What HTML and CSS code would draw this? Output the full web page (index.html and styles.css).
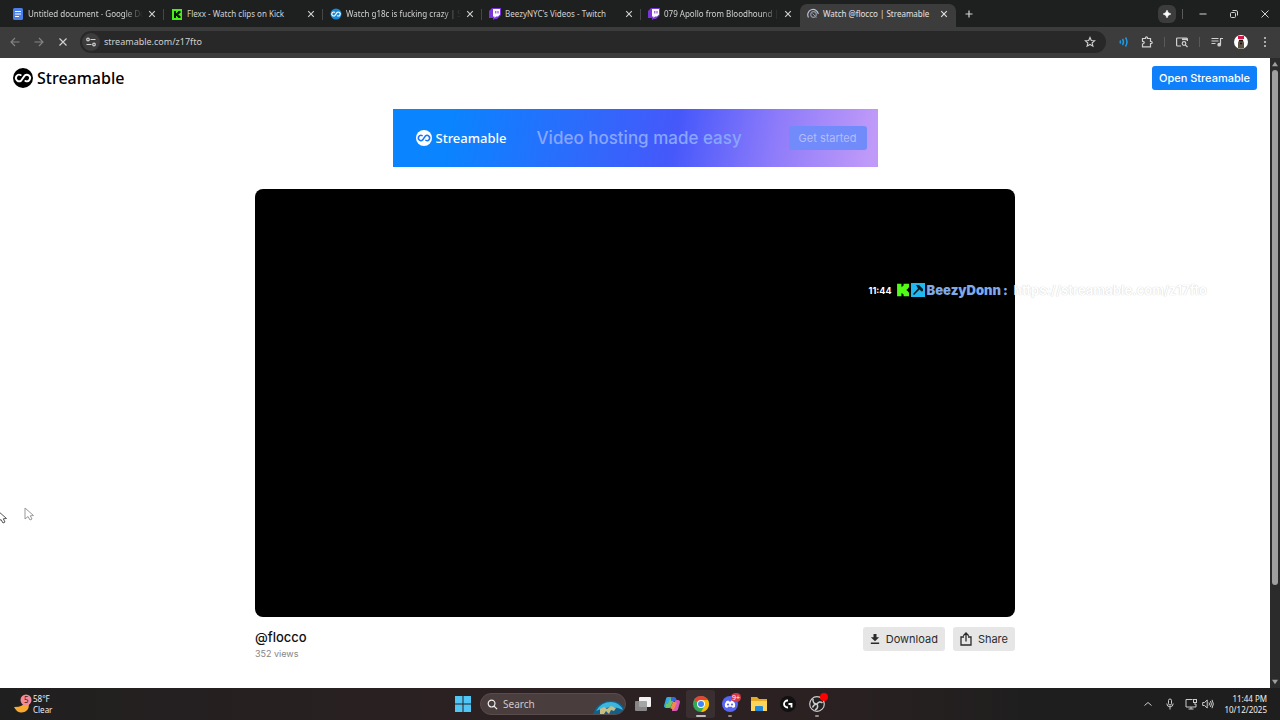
FILE: index.html
```html
<!DOCTYPE html>
<html lang="en">
<head>
    <meta charset="UTF-8">
    <meta name="viewport" content="width=device-width, initial-scale=1.0">
    <title>Watch @flocco | Streamable</title>
    <link rel="stylesheet" href="styles.css">
</head>
<body>
<svg class="defs" aria-hidden="true">
    <symbol id="loop" viewBox="0 0 24 24">
        <path d="M9.200 8.500A3.900 3.900 0 1 0 10 14.900L14 9.100A3.900 3.900 0 1 1 14.800 15.500" fill="none" stroke="currentColor" stroke-width="2.300" stroke-linecap="round"/>
    </symbol>
    <symbol id="close" viewBox="0 0 10 10">
        <path d="M2.200 2.200L7.800 7.800M7.800 2.200L2.200 7.800" stroke="currentColor" stroke-width="1.100"/>
    </symbol>
    <symbol id="twitch" viewBox="0 0 12 12">
        <path d="M3 0H12V7L8 11H6L4 12V10H0V3Z" fill="#7a35d8"/>
        <path d="M4 1H11V6.500L9 8.500H7L5.500 10V8.500H4Z" fill="#fff"/>
        <path d="M6.800 3V5.500M9 3V5.500" stroke="#7a35d8" stroke-width="1"/>
    </symbol>
    <symbol id="kick" viewBox="0 0 12 12">
        <path d="M1 0H5V3H6V2H7V0H12V4H11V5H10V7H11V8H12V12H7V10H6V9H5V12H1Z"/>
    </symbol>
</svg>

<div class="tabs">
    <div class="tab">
        <svg class="favicon" viewBox="0 0 12 12"><rect x="1" width="10" height="12" rx="1.500" fill="#4a80e8"/><path d="M3 3.500H9M3 6H9M3 8.500H7" stroke="#fff"/></svg>
        <span class="tab-title fade">Untitled document - Google Do</span>
        <button class="tab-close" aria-label="Close tab"><svg><use href="#close"/></svg></button>
    </div>
    <div class="tab">
        <svg class="favicon" viewBox="0 0 12 12"><rect x="1" y="1" width="10" height="11" fill="#46f016"/><path d="M3 3H5V5H6V4H7V3H9.500V5H8.500V6H7.500V7H8.500V8H9.500V10H7V9H6V8H5V10H3Z" fill="#111"/></svg>
        <span class="tab-title">Flexx - Watch clips on Kick</span>
        <button class="tab-close" aria-label="Close tab"><svg><use href="#close"/></svg></button>
    </div>
    <div class="tab">
        <svg class="favicon white" viewBox="0 0 24 24"><circle cx="12" cy="12" r="11" fill="#1889d6"/><use href="#loop"/></svg>
        <span class="tab-title fade">Watch g18c is fucking crazy | St</span>
        <button class="tab-close" aria-label="Close tab"><svg><use href="#close"/></svg></button>
    </div>
    <div class="tab">
        <svg class="favicon"><use href="#twitch"/></svg>
        <span class="tab-title">BeezyNYC's Videos - Twitch</span>
        <button class="tab-close" aria-label="Close tab"><svg><use href="#close"/></svg></button>
    </div>
    <div class="tab last">
        <svg class="favicon"><use href="#twitch"/></svg>
        <span class="tab-title fade">079 Apollo from Bloodhound | V</span>
        <button class="tab-close" aria-label="Close tab"><svg><use href="#close"/></svg></button>
    </div>
    <div class="tab active">
        <svg class="favicon" viewBox="0 0 12 12" fill="none"><path d="M1.500 9.500A5.300 5.300 0 1 1 11.300 6" stroke="#b9c0d8" stroke-width="1.200"/><circle cx="6.500" cy="6.500" r="2.800" stroke="#8f95a5" stroke-width="1.200"/><path d="M5.500 5.500L9.500 9.500" stroke="#8f95a5"/></svg>
        <span class="tab-title">Watch @flocco | Streamable</span>
        <button class="tab-close" aria-label="Close tab"><svg><use href="#close"/></svg></button>
    </div>
    <button class="new-tab" aria-label="New tab"><svg viewBox="0 0 10 10"><path d="M5 1.500V8.500M1.500 5H8.500" stroke="currentColor" stroke-width="1.200"/></svg></button>
    <div class="window-buttons">
        <button class="gemini" aria-label="Assistant"><svg viewBox="0 0 12 12"><path d="M6 1.500Q6.700 5.300 10.500 6Q6.700 6.700 6 10.500Q5.300 6.700 1.500 6Q5.300 5.300 6 1.500Z" fill="#fff" stroke="#fff"/></svg></button>
        <span class="line"></span>
        <button class="win" aria-label="Minimize"><svg viewBox="0 0 10 10"><path d="M1.500 5H8.500" stroke="currentColor"/></svg></button>
        <button class="win" aria-label="Restore"><svg viewBox="0 0 10 10" fill="none" stroke="currentColor"><rect x="1.500" y="3.500" width="5" height="5" rx="1"/><path d="M3.500 1.500H7A1.500 1.500 0 0 1 8.500 3V6.500"/></svg></button>
        <button class="win" aria-label="Close window"><svg viewBox="0 0 10 10"><path d="M1.500 1.500L8.500 8.500M8.500 1.500L1.500 8.500" stroke="currentColor"/></svg></button>
    </div>
</div>

<div class="toolbar">
    <button class="nav dim" aria-label="Back"><svg viewBox="0 0 12 12"><path d="M10.500 6H2M6 2L2 6L6 10" fill="none" stroke="currentColor" stroke-width="1.100"/></svg></button>
    <button class="nav dim" aria-label="Forward"><svg viewBox="0 0 12 12"><path d="M1.500 6H10M6 2L10 6L6 10" fill="none" stroke="currentColor" stroke-width="1.100"/></svg></button>
    <button class="nav" aria-label="Stop"><svg viewBox="0 0 12 12"><path d="M2.500 2.500L9.500 9.500M9.500 2.500L2.500 9.500" stroke="currentColor" stroke-width="1.200"/></svg></button>
    <div class="omnibox">
        <button class="site-info" aria-label="Site information"><svg viewBox="0 0 12 12" fill="none" stroke="currentColor" stroke-width="1.200"><circle cx="3" cy="3.500" r="1.300"/><path d="M5.500 3.500H10.500M1.500 8.500H6.500"/><circle cx="9" cy="8.500" r="1.300"/></svg></button>
        <input type="text" value="streamable.com/z17fto" aria-label="Address bar">
        <button class="star" aria-label="Bookmark"><svg viewBox="0 0 12 12"><path d="M6 1.500L7.300 4.500L10.600 4.800L8.100 7L8.900 10.200L6 8.500L3.100 10.200L3.900 7L1.400 4.800L4.700 4.500Z" fill="none" stroke="currentColor" stroke-width="1.100"/></svg></button>
    </div>
    <div class="tools">
        <button class="blue" aria-label="Volume extension"><svg viewBox="0 0 12 12" fill="none" stroke="currentColor" stroke-width="1.500"><path d="M2 4.500Q3 6 2 7.500M4.500 3Q6.500 6 4.500 9M7.500 1.500Q10.500 6 7.500 10.500"/></svg></button>
        <button aria-label="Extensions"><svg viewBox="0 0 12 12" fill="none" stroke="currentColor" stroke-width="1.200"><path d="M1.500 2.500H4.500V1.800A1 1 0 0 1 6.500 1.800V2.500H9.500V5.500H10.200A1 1 0 0 1 10.200 7.500H9.500V10.800H1.500V8Q3.300 7.800 3.300 6.600Q3.300 5.500 1.500 5.300Z"/></svg></button>
        <span class="line"></span>
        <button aria-label="Search side panel"><svg viewBox="0 0 12 12" fill="none" stroke="currentColor" stroke-width="1.200"><path d="M5 10H1.500Q.6 10 .6 9V3Q.6 2 1.500 2H10.500Q11.400 2 11.400 3V5"/><path d="M6 3.200H11" stroke-width="1.800"/><circle cx="8" cy="7.500" r="1.800"/><path d="M9.300 8.800L11.500 11"/></svg></button>
        <span class="line"></span>
        <button aria-label="Media controls"><svg viewBox="0 0 12 12" fill="none" stroke="currentColor" stroke-width="1.200"><path d="M.5 2.500H7.500M.5 5H7.500M.5 7.500H4.500M9.500 8.500V2.500H12"/><circle cx="8.200" cy="8.700" r="1.300" fill="currentColor"/></svg></button>
        <button aria-label="Profile"><svg class="avatar" viewBox="0 0 14 14"><circle cx="7" cy="7" r="7" fill="#fff"/><path d="M4 13V8L5 5H9L10 8V13Q7 14.500 4 13Z" fill="#5d5140"/><rect x="4" y="1" width="6" height="3" fill="#d41845"/><path d="M5 5.500H9M6 8.500H8" stroke="#191919" stroke-width="1.500"/></svg></button>
        <button aria-label="Menu"><svg viewBox="0 0 12 12" fill="currentColor"><circle cx="6" cy="2" r="1"/><circle cx="6" cy="6" r="1"/><circle cx="6" cy="10" r="1"/></svg></button>
    </div>
</div>

<div class="viewport">
    <div class="page">
        <header>
            <a class="logo" href="#">
                <svg viewBox="0 0 24 24"><circle cx="12" cy="12" r="12" fill="#000"/><use class="white" href="#loop"/></svg>
                Streamable
            </a>
            <button class="open">Open Streamable</button>
        </header>
        <a class="banner" href="#">
            <span class="banner-logo"><svg viewBox="0 0 24 24"><circle cx="12" cy="12" r="12" fill="#fff"/><use href="#loop"/></svg>Streamable</span>
            <span class="slogan">Video hosting made easy</span>
            <span class="started">Get started</span>
        </a>
        <main>
            <div class="video"></div>
            <div class="details">
                <div>
                    <h1>@flocco</h1>
                    <p>352 views</p>
                </div>
                <div class="actions">
                    <button><svg viewBox="0 0 12 12" fill="currentColor"><path d="M4.200 0H7.800V4H11L6 8.800L1 4H4.200ZM1 10.300H11V12H1Z"/></svg>Download</button>
                    <button><svg class="tall" viewBox="0 0 12 14" fill="none" stroke="currentColor" stroke-width="1.300"><path d="M4 5H1V13H11V5H8M6 9.500V1M3.300 3.700L6 1L8.700 3.700"/></svg>Share</button>
                </div>
            </div>
        </main>
    </div>
    <div class="scrollbar">
        <svg viewBox="0 0 8 6"><path d="M4 0L8 6H0Z"/></svg>
        <div class="track"><div class="thumb"></div></div>
        <svg viewBox="0 0 8 6"><path d="M0 0H8L4 6Z"/></svg>
    </div>

    <!-- chat overlay -->
    <div class="chat">
        <time>11:44</time>
        <svg viewBox="0 0 12 12" fill="#53fc18"><use href="#kick"/></svg>
        <svg class="mod" viewBox="0 0 14 14"><rect width="14" height="14" fill="#1fb8f0"/><path d="M5 2H8L12 6V8L10.500 8.500L8.500 6.500L3 12L2 11L7 5.500Z" fill="#0b1c26"/></svg>
        <b>BeezyDonn</b><b class="colon">:</b>
        <span class="link">https://streamable.com/z17fto</span>
    </div>
    <svg class="cursor edge" viewBox="0 0 10 14"><path d="M1 1V12L4 9.500L6 13L8 12L6.300 8.800L9.500 8.500Z"/></svg>
    <svg class="cursor soft" viewBox="0 0 10 14"><path d="M1 1V12L4 9.500L6 13L8 12L6.300 8.800L9.500 8.500Z"/></svg>
</div>

<footer class="taskbar">
    <div class="weather">
        <svg viewBox="0 0 20 20"><path d="M11 7Q12 13 1 13Q4 19 9 18.500Q16 18 16 10Z" fill="#f8a932"/><circle cx="13" cy="6" r="5.500" fill="#f28a9c"/><text x="11" y="9">5</text></svg>
        <div>58°F<br>Clear</div>
    </div>
    <div class="apps">
        <button class="start" aria-label="Start"><svg viewBox="0 0 16 16" fill="#4fc6f5"><path d="M0 0H7.500V7.500H0ZM8.500 0H16V7.500H8.500ZM0 8.500H7.500V16H0ZM8.500 8.500H16V16H8.500Z"/></svg></button>
        <div class="search">
            <svg viewBox="0 0 12 12" fill="none" stroke="currentColor" stroke-width="1.300"><circle cx="5" cy="5" r="3.700"/><path d="M7.700 7.700L11 11"/></svg>
            <input type="text" placeholder="Search" aria-label="Search">
            <svg class="art" viewBox="0 0 32 14"><path d="M0 14Q3 4 14 1Q27 -1 32 10Q31 13 28 14Z" fill="#12608c"/><path d="M3 11Q8 2 18 2Q26 2 30 10Q20 4 3 11Z" fill="#3bb6df"/><path d="M7 14V9L11 7L14 9L18 6L23 8L21 11L18 10L16 14L13 11L11 14Z" fill="#c7bd85"/></svg>
        </div>
        <button aria-label="Task view"><svg viewBox="0 0 18 18"><rect x="5" y="2" width="12" height="10" rx="1" fill="#f2f2f2"/><rect x="1" y="6" width="12" height="10" rx="1" fill="#999" fill-opacity=".85"/></svg></button>
        <button aria-label="Copilot"><svg viewBox="0 0 18 18" fill="none" stroke-width="4" stroke-linejoin="round"><path d="M9 4H5L3 11H6" stroke="#36a9e8"/><path d="M3 11H6L9 4" stroke="#6ac66b"/><path d="M9 14H13L15 7H12" stroke="#d759b6"/><path d="M9 14L12 7" stroke="#f08b4b"/><path d="M8 4H11L12 6" stroke="#3269df"/></svg></button>
        <button class="current" aria-label="Chrome"><svg viewBox="0 0 18 18"><circle cx="9" cy="9" r="8" fill="#34a853"/><path d="M9 9L2.070 5A8 8 0 0 1 15.930 5Z" fill="#ea4335"/><path d="M9 9L9 5H15.930A8 8 0 0 1 9 17L12.500 11Z" fill="#fbbc05"/><circle cx="9" cy="9" r="4" fill="#fff"/><circle cx="9" cy="9" r="3" fill="#4285f4"/></svg></button>
        <button class="running" aria-label="Discord"><svg viewBox="0 0 18 18"><circle cx="9" cy="9" r="8" fill="#5865f2"/><path d="M4 12Q3.500 8 5.500 6L7.500 5.500L8 6.500H10L10.500 5.500L12.500 6Q14.500 8 14 12L11.700 13L11 11.800H7L6.300 13Z" fill="#fff"/><circle cx="7" cy="9.500" r="1.100" fill="#5865f2"/><circle cx="11" cy="9.500" r="1.100" fill="#5865f2"/></svg><span class="badge">9+</span></button>
        <button aria-label="File Explorer"><svg viewBox="0 0 18 18"><path d="M1 2H7L9 4H17V15H1Z" fill="#e8a922"/><path d="M1 6H17V16H1Z" fill="#fcd45a"/><path d="M5 16V12Q5 11 6 11H12Q13 11 13 12V16Z" fill="#2488d8"/></svg></button>
        <button aria-label="Logitech G Hub"><svg viewBox="0 0 18 18"><circle cx="9" cy="9" r="8" fill="#111"/><path d="M9 5.500H8.500A3.500 3.500 0 0 0 8.500 12.500H9M9.500 9H12.500V12.500" fill="none" stroke="#fff" stroke-width="1.800"/></svg></button>
        <button class="running" aria-label="OBS Studio"><svg viewBox="0 0 18 18" fill="none" stroke="#ccc" stroke-width="1.200"><circle cx="9" cy="9" r="7.300" fill="#222"/><path d="M9 9Q4.500 9 5 4M9 9Q11.500 5.500 14.500 8M9 9Q11 13 7 15M9 9Q6 9 4.500 12.500" stroke-width="1.500"/></svg><span class="badge dot"></span></button>
    </div>
    <div class="tray">
        <svg viewBox="0 0 12 12"><path d="M2.500 7.500L6 4.500L9.500 7.500"/></svg>
        <svg class="mic" viewBox="0 0 12 12"><rect x="4.500" y="1" width="3" height="6" rx="1.500"/><path d="M2.800 5.500Q2.800 8.800 6 8.800Q9.200 8.800 9.200 5.500M6 9V11.500"/></svg>
        <svg viewBox="0 0 12 12"><path d="M7.500 1.500H1V9H11V6M3.500 11H8.500M6 9V11M10 5V7"/><rect x="8.500" y="1.500" width="3" height="3"/></svg>
        <svg viewBox="0 0 12 12"><path d="M.7 4.500H2.500L5.200 2V10L2.500 7.500H.7ZM7 4.500Q8 6 7 7.500M8.500 3Q10.300 6 8.500 9M10 1.800Q12.700 6 10 10.200"/></svg>
        <div class="clock">11:44 PM<br>10/12/2025</div>
    </div>
</footer>
</body>
</html>
```

FILE: styles.css
```css
* { box-sizing: border-box; }
body {
    margin: 0; height: 100vh;
    display: flex; flex-direction: column;
    font-family: "Noto Sans", "Open Sans", sans-serif;
    background: #fff; color: #111; overflow: hidden;
}
button {
    border: none; padding: 0; background: none; color: inherit;
    font: inherit; display: flex; align-items: center; justify-content: center;
}
input { border: none; outline: none; background: none; color: inherit; font: inherit; padding: 0; min-width: 0; }
a { text-decoration: none; color: inherit; }
svg { flex: none; }
.defs { display: none; }
.white { color: #fff; }

/* tab strip */
.tabs {
    display: flex; align-items: stretch;
    height: 27px; padding: 4px 0 0 5px; flex: none;
    background: #1e201f; color: #d2d2d2; font-size: 8px;
}
.tab {
    flex: 0 1 159px; min-width: 0; padding: 0 7px 4px; position: relative;
    display: flex; align-items: center; gap: 4px;
}
.tab::after {
    content: ""; width: 1px; height: 11px; background: #454746;
    position: absolute; right: 0; top: 5px;
}
.tab.last::after, .tab.active::after { display: none; }
.tab.active { background: #3c3c3c; border-radius: 7px 7px 0 0; flex-basis: 156px; color: #e3e3e3; }
.favicon { width: 12px; height: 12px; }
.tab-title { flex: 1; min-width: 0; white-space: nowrap; }
.tab-title.fade {
    -webkit-mask-image: linear-gradient(90deg, #000 84%, transparent);
    mask-image: linear-gradient(90deg, #000 84%, transparent);
}
.tab-close svg, .new-tab svg, .win svg { width: 10px; height: 10px; display: block; }
.new-tab { width: 26px; padding-bottom: 4px; }
.window-buttons { margin-left: auto; display: flex; align-items: center; padding-bottom: 4px; }
.gemini { width: 18px; height: 18px; border-radius: 6px; background: #3c3c3c; margin-right: 6px; }
.gemini svg { width: 10px; height: 10px; }
.line { width: 1px; height: 10px; background: #5a5a5a; }
.win { width: 31px; }
.window-buttons .line { margin-right: 4px; }

/* toolbar */
.toolbar {
    display: flex; align-items: center;
    height: 31px; padding: 0 9px 2px 3px; flex: none;
    background: #3c3c3c; color: #d0d0d0;
}
.toolbar svg { width: 12px; height: 12px; display: block; }
.nav { width: 24px; height: 24px; }
.dim { color: #858585; }
.omnibox {
    flex: 1; height: 22px; margin-left: 5px; padding: 0 10px 0 2px;
    display: flex; align-items: center; gap: 4px;
    background: #282828; border-radius: 11px; font-size: 9px;
}
.omnibox input { flex: 1; }
.site-info { width: 18px; height: 18px; border-radius: 50%; background: #3c3c3c; }
.tools { display: flex; align-items: center; gap: 11px; margin-left: 12px; }
.toolbar .avatar { width: 14px; height: 14px; }
.blue { color: #1e9be8; }

/* page */
.viewport { flex: 1; min-height: 0; display: flex; position: relative; overflow: hidden; }
.page { flex: 1; display: flex; flex-direction: column; align-items: center; font-family: Inter, sans-serif; }
header { width: 100%; height: 40px; padding: 0 13px; display: flex; align-items: center; justify-content: space-between; }
.logo, .banner-logo { display: flex; align-items: center; gap: 4px; font-family: "Noto Sans", sans-serif; font-weight: 500; font-size: 16px; color: #000; }
.logo svg { width: 20px; height: 20px; }
.open { background: #0f80fa; color: #fff; height: 24px; padding: 0 7px; border-radius: 3px; font-size: 11px; font-weight: 500; }
.banner {
    width: 485px; max-width: 100%; height: 58px; margin-top: 11px; padding: 0 11px 0 23px;
    display: flex; align-items: center;
    background: linear-gradient(100deg, #0a84ff 12%, #4658fa 58%, #8d7bfa 78%, #bf9af8 98%);
}
.banner-logo { font-size: 13px; color: #fff; }
.banner-logo svg { width: 16px; height: 16px; color: #1876ff; }
.slogan { font-size: 17px; font-weight: 500; color: #88a6ff; margin-left: 30px; }
.started { background: #718bfa; color: #b5bdfd; height: 24px; line-height: 24px; padding: 0 10px; border-radius: 3px; font-size: 11px; margin-left: auto; }
main { width: 100%; max-width: 760px; margin-top: 22px; }
.video { aspect-ratio: 16 / 9; background: #000; border-radius: 8px; }
.details { display: flex; justify-content: space-between; padding-top: 10px; }
h1 { margin: 0; font-size: 13px; line-height: 20px; font-weight: 500; }
p { margin: 0; font-size: 9px; line-height: 14px; color: #858585; }
.actions { display: flex; gap: 8px; }
.actions button { height: 24px; padding: 0 7px; gap: 6px; background: #e6e6e6; border-radius: 3px; font-size: 11px; color: #2b2b2b; }
.actions svg { width: 10px; height: 12px; }
.actions .tall { width: 12px; height: 14px; }

.scrollbar { width: 10px; background: #2b2b2b; display: flex; flex-direction: column; align-items: center; padding: 3px 0; gap: 3px; }
.scrollbar svg { width: 6px; height: 6px; fill: #9f9f9f; }
.track { flex: 1; width: 6px; }
.thumb { height: 85%; background: #9f9f9f; border-radius: 3px; }

.chat {
    position: absolute; right: 73px; top: 222px;
    display: flex; align-items: center; height: 20px;
    font: 700 13px Inter, sans-serif; color: #fff; white-space: nowrap;
}
.chat time { font-size: 9px; margin-right: 4px; }
.chat svg { width: 13px; height: 14px; margin-right: 2px; }
.chat .mod { width: 14px; }
.chat b { color: #7fa9e8; }
.chat .colon { margin: 0 6px 0 2px; }
.link { text-shadow: 0 0 1px #bbb; }
.cursor { position: absolute; width: 10px; height: 14px; fill: #fff; stroke: #555; stroke-width: 1; }
.edge { left: -3px; top: 452px; }
.soft { left: 24px; top: 449px; stroke: #999; }

/* taskbar */
.taskbar {
    height: 32px; flex: none; padding: 0 13px;
    display: grid; grid-template-columns: 1fr auto 1fr; align-items: center;
    background: linear-gradient(90deg, #201f1f, #2c2122 40%, #2c2122 62%, #1f1e1e 80%);
    color: #f0f0f0; font-size: 8px; line-height: 11px;
}
.weather { display: flex; align-items: center; }
.weather svg { width: 20px; height: 20px; }
.weather text { font-size: 8px; fill: #3a1d22; }
.apps { display: flex; align-items: center; height: 100%; padding-left: 6px; }
.apps button { width: 29px; height: 28px; position: relative; }
.apps button svg { width: 18px; height: 18px; }
.apps .start { width: 16px; margin-right: 9px; }
.apps .start svg { width: 16px; height: 16px; }
.search { width: 146px; height: 22px; margin-right: 2px; padding-left: 6px; display: flex; align-items: center; gap: 5px; background: #493d3d; border: 1px solid #594c4c; border-radius: 11px; font-size: 10px; overflow: hidden; }
.search svg { width: 11px; height: 11px; }
.search input { flex: 1; }
.search input::placeholder { color: #d0c8c8; }
.search .art { width: 32px; height: 14px; align-self: flex-end; }
.apps .current { background: #3a2f30; border-radius: 3px; }
.current::after, .running::after {
    content: ""; position: absolute; bottom: 1px; left: 50%; margin-left: -5px;
    width: 10px; height: 2px; border-radius: 1px; background: #c6bcbc;
}
.running::after { width: 4px; margin-left: -2px; background: #938989; }
.badge { position: absolute; top: 3px; right: 3px; width: 10px; height: 9px; border-radius: 5px; background: #d23a4a; color: #fff; font-size: 7px; line-height: 9px; text-align: center; }
.dot { width: 8px; height: 8px; background: #f00; }
.tray { display: flex; align-items: center; justify-content: flex-end; gap: 5px; }
.tray svg { width: 12px; height: 12px; fill: none; stroke: #ccc; stroke-width: 1; }
.tray .mic { margin: 0 4px 0 5px; }
.clock { text-align: right; margin-left: 5px; }
```
